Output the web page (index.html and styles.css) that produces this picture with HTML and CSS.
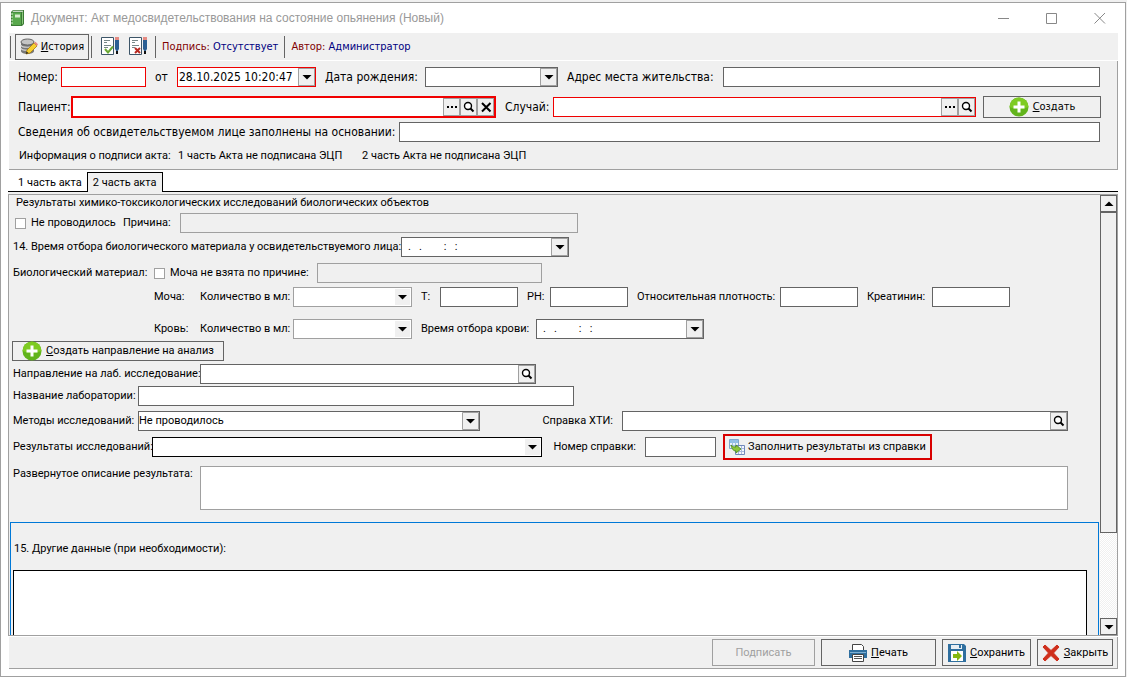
FILE: index.html
```html
<!DOCTYPE html>
<html lang="ru">
<head>
  <meta charset="UTF-8">
  <meta name="viewport" content="width=device-width, initial-scale=1.0">
  <title>Акт медосвидетельствования на состояние опьянения</title>
  <link rel="stylesheet" href="styles.css">
</head>
<body>
  <!-- общие значки -->
  <svg class="sprite" aria-hidden="true">
    <symbol id="icon-plus" viewBox="0 0 20 20">
      <circle cx="10" cy="10" r="9.5" fill="#62b41c"/>
      <path d="M.5 10a9.5 9.5 0 0 1 19 0q-9.5 4-19 0z" fill="#7ecb22"/>
      <path d="M8.500 4.500h3v4h4v3h-4v4h-3v-4h-4v-3h4z" fill="#fff"/>
    </symbol>
    <symbol id="icon-search" viewBox="0 0 12 12">
      <circle cx="5" cy="5" r="3.500" fill="#fff" stroke="#000" stroke-width="1.400"/>
      <path d="M7.500 7.500L10.500 10.500" stroke="#000" stroke-width="2"/>
    </symbol>
    <symbol id="icon-dots" viewBox="0 0 12 12">
      <path d="M1 5h2v2H1zM5 5h2v2H5zM9 5h2v2H9z" fill="#000"/>
    </symbol>
    <symbol id="icon-clear" viewBox="0 0 12 12">
      <path d="M2 2L10.500 10.500M10.500 2L2 10.500" stroke="#000" stroke-width="2"/>
    </symbol>
    <symbol id="icon-down" viewBox="0 0 12 12">
      <path d="M1.500 4h9L6 8.500z" fill="#000"/>
    </symbol>
  </svg>

  <div class="window">
    <!-- заголовок окна -->
    <header class="titlebar">
      <svg class="book" viewBox="0 0 14 16" aria-hidden="true">
        <path d="M1 2L3 0H14V14L12 16H1z" fill="#3b7a35"/>
        <path d="M2 2.500h9V15H2z" fill="#58a84c"/>
        <path d="M3 .8h10v1H2.500z" fill="#f4f7f0"/>
        <path d="M12 2.500l1-1V13.500l-1 1z" fill="#8cc97d"/>
        <path d="M5 4.500h5v3H5z" fill="#d8eccf"/>
        <path d="M1 4h2M1 7h2M1 10h2M1 13h2" stroke="#d8eccf"/>
      </svg>
      <h1>Документ: Акт медосвидетельствования на состояние опьянения (Новый)</h1>
      <div class="window-buttons">
        <button type="button" aria-label="Свернуть"><svg viewBox="0 0 12 12"><path d="M0 6.500h11"/></svg></button>
        <button type="button" aria-label="Развернуть"><svg viewBox="0 0 12 12"><path d="M.5 1.500h10v10H.5z"/></svg></button>
        <button type="button" aria-label="Закрыть окно"><svg viewBox="0 0 12 12"><path d="M.5 1l10.500 10.500M11 1L.5 11.500"/></svg></button>
      </div>
    </header>

    <!-- панель инструментов -->
    <div class="toolbar">
      <span class="divider"></span>
      <button type="button" class="btn btn-history">
        <svg viewBox="0 0 18 17" aria-hidden="true">
          <path d="M1 4v9c0 4 13 4 13 0V4z" fill="#777"/>
          <path d="M1 7c0 3 13 3 13 0M1 10c0 3 13 3 13 0" fill="none" stroke="#d5d5d5" stroke-width="1.200"/>
          <ellipse cx="7.500" cy="4" rx="6.500" ry="3" fill="#c4c4c4" stroke="#666"/>
          <path d="M6 16l1-4 7-7 3 3-7 7z" fill="#f6cf31" stroke="#a57a12" stroke-width=".8"/>
          <path d="M14 5l1.500-1.300L18 6.300 17 8z" fill="#e98a80"/>
          <path d="M6 16l.5-2.500L8.500 15z" fill="#222"/>
        </svg>
        <span><u>И</u>стория</span>
      </button>
      <span class="divider"></span>
      <button type="button" class="tool" aria-label="Подписать акт">
        <svg viewBox="0 0 19 19">
          <path d="M.5.5h12v17H.5z" fill="#fff" stroke="#3d5568"/>
          <path d="M3 3.500h6M3 5.500h3M3 8.500h7M3 10.500h4" stroke="#788"/>
          <path d="M4 12l3 3.500 5-6" fill="none" stroke="#6aa833" stroke-width="2"/>
          <path d="M14 0h4v3h-4z" fill="#e58b83"/><path d="M14 3h4v9l-2 3-2-3z" fill="#2b5f93"/><path d="M15 14h2v3h-2z" fill="#111"/>
        </svg>
      </button>
      <button type="button" class="tool" aria-label="Снять подпись">
        <svg viewBox="0 0 19 19">
          <path d="M.5.5h12v17H.5z" fill="#fff" stroke="#3d5568"/>
          <path d="M3 3.500h6M3 5.500h3M3 8.500h7M3 10.500h3" stroke="#788"/>
          <path d="M6 11l5 5M11 11l-5 5" stroke="#b92a22" stroke-width="2"/>
          <path d="M14 0h4v3h-4z" fill="#e58b83"/><path d="M14 3h4v9l-2 3-2-3z" fill="#2b5f93"/><path d="M15 14h2v3h-2z" fill="#111"/>
        </svg>
      </button>
      <span class="divider"></span>
      <p><span class="key">Подпись:</span> <span class="value">Отсутствует</span></p>
      <span class="divider"></span>
      <p><span class="key">Автор:</span> <span class="value">Администратор</span></p>
    </div>

    <!-- шапка документа -->
    <section class="head">
      <div class="row head-number">
        <label for="number">Номер:</label>
        <div class="field required"><input id="number" type="text"></div>
        <label for="date" class="lead">от</label>
        <div class="field required">
          <input id="date" type="text" value="28.10.2025 10:20:47">
          <button type="button" aria-label="Выбрать дату"><svg><use href="#icon-down"/></svg></button>
        </div>
        <label for="birth" class="lead">Дата рождения:</label>
        <div class="field">
          <input id="birth" type="text">
          <button type="button" aria-label="Выбрать дату рождения"><svg><use href="#icon-down"/></svg></button>
        </div>
        <label for="address" class="lead">Адрес места жительства:</label>
        <div class="field"><input id="address" type="text"></div>
      </div>
      <div class="row head-patient">
        <label for="patient">Пациент:</label>
        <div class="field required focused">
          <input id="patient" type="text">
          <button type="button" aria-label="Выбрать пациента"><svg><use href="#icon-dots"/></svg></button>
          <button type="button" aria-label="Найти пациента"><svg><use href="#icon-search"/></svg></button>
          <button type="button" aria-label="Очистить"><svg><use href="#icon-clear"/></svg></button>
        </div>
        <label for="case" class="lead">Случай:</label>
        <div class="field required">
          <input id="case" type="text">
          <button type="button" aria-label="Выбрать случай"><svg><use href="#icon-dots"/></svg></button>
          <button type="button" aria-label="Найти случай"><svg><use href="#icon-search"/></svg></button>
        </div>
        <button type="button" class="btn btn-create"><svg class="plus"><use href="#icon-plus"/></svg><span><u>С</u>оздать</span></button>
      </div>
      <div class="row head-basis">
        <label for="basis">Сведения об освидетельствуемом лице заполнены на основании:</label>
        <div class="field"><input id="basis" type="text"></div>
      </div>
      <div class="row sign-info">
        <span>Информация о подписи акта:</span>
        <span>1 часть Акта не подписана ЭЦП</span>
        <span>2 часть Акта не подписана ЭЦП</span>
      </div>
    </section>

    <!-- вкладки -->
    <nav class="tabs">
      <button type="button">1 часть акта</button>
      <button type="button" class="active">2 часть акта</button>
    </nav>

    <main class="page">
      <form class="form">
        <h2>Результаты химико-токсикологических исследований биологических объектов</h2>

        <div class="row row-reason">
          <label class="check"><input type="checkbox">Не проводилось</label>
          <label for="reason">Причина:</label>
          <div class="field off"><input id="reason" type="text" disabled></div>
        </div>

        <div class="row row-time">
          <label for="sample-time">14. Время отбора биологического материала у освидетельствуемого лица:</label>
          <div class="field masked">
            <input id="sample-time" type="text" value=".   .        :   :">
            <button type="button" aria-label="Выбрать время"><svg><use href="#icon-down"/></svg></button>
          </div>
        </div>

        <div class="row row-material">
          <span>Биологический материал:</span>
          <label class="check"><input type="checkbox">Моча не взята по причине:</label>
          <div class="field off"><input type="text" aria-label="Причина" disabled></div>
        </div>

        <div class="row row-urine">
          <span>Моча:</span>
          <label for="urine-ml">Количество в мл:</label>
          <select id="urine-ml" class="pale"><option></option></select>
          <label for="urine-t" class="lead">Т:</label>
          <div class="field"><input id="urine-t" type="text"></div>
          <label for="urine-ph" class="lead">PH:</label>
          <div class="field"><input id="urine-ph" type="text"></div>
          <label for="density" class="lead">Относительная плотность:</label>
          <div class="field"><input id="density" type="text"></div>
          <label for="creatinine" class="lead">Креатинин:</label>
          <div class="field"><input id="creatinine" type="text"></div>
        </div>

        <div class="row row-blood">
          <span>Кровь:</span>
          <label for="blood-ml">Количество в мл:</label>
          <select id="blood-ml" class="pale"><option></option></select>
          <label for="blood-time" class="lead">Время отбора крови:</label>
          <div class="field masked">
            <input id="blood-time" type="text" value=".   .        :   :">
            <button type="button" aria-label="Выбрать время"><svg><use href="#icon-down"/></svg></button>
          </div>
        </div>

        <button type="button" class="btn btn-referral"><svg class="plus"><use href="#icon-plus"/></svg><span><u>С</u>оздать направление на анализ</span></button>

        <div class="row row-referral">
          <label for="referral">Направление на лаб. исследование:</label>
          <div class="field">
            <input id="referral" type="text">
            <button type="button" aria-label="Найти направление"><svg><use href="#icon-search"/></svg></button>
          </div>
        </div>

        <div class="row row-lab">
          <label for="lab">Название лаборатории:</label>
          <div class="field"><input id="lab" type="text"></div>
        </div>

        <div class="row row-methods">
          <label for="methods">Методы исследований:</label>
          <select id="methods"><option>Не проводилось</option></select>
          <label for="reference" class="end">Справка ХТИ:</label>
          <div class="field">
            <input id="reference" type="text">
            <button type="button" aria-label="Найти справку"><svg><use href="#icon-search"/></svg></button>
          </div>
        </div>

        <div class="row row-results">
          <label for="results">Результаты исследований:</label>
          <select id="results" class="pale strong"><option></option></select>
          <label for="reference-number" class="end">Номер справки:</label>
          <div class="field"><input id="reference-number" type="text"></div>
          <button type="button" class="btn btn-fill">
            <svg viewBox="0 0 16 16" aria-hidden="true">
              <path d="M.5.5h9v9h-9z" fill="#eaf3fc" stroke="#7fa6cc"/>
              <path d="M1 1h8v3H1z" fill="#8fc0ea"/>
              <path d="M3.500 1v8M6.500 1v8M1 6.500h8" stroke="#9dbfdf"/>
              <path d="M6.500 6.500h9v9h-9z" fill="#f2f6fd" stroke="#7088bb"/>
              <path d="M9.500 7v8M12.500 7v8M7 9.500h8M7 12.500h8" stroke="#a9b9dd"/>
              <path d="M2 6q2 2.500 5 2V6l5 4-5 4v-2Q3 12 2 6z" fill="#8cc63c" stroke="#4c8a1c" stroke-width=".8"/>
            </svg>
            <span>Заполнить результаты из справки</span>
          </button>
        </div>

        <div class="row row-details">
          <label for="details">Развернутое описание результата:</label>
          <textarea id="details"></textarea>
        </div>

        <div class="other">
          <label for="other">15. Другие данные (при необходимости):</label>
          <textarea id="other"></textarea>
        </div>
      </form>

      <div class="scrollbar">
        <button type="button" aria-label="Вверх"><svg viewBox="0 0 12 12"><path d="M1.500 8h9L6 3.500z"/></svg></button>
        <div class="thumb"></div>
        <button type="button" aria-label="Вниз"><svg><use href="#icon-down"/></svg></button>
      </div>
    </main>

    <footer class="actions">
      <button type="button" class="btn btn-sign" disabled>Подписать</button>
      <button type="button" class="btn btn-print">
        <svg viewBox="0 0 18 18" aria-hidden="true">
          <path d="M3.500.5h9l2 2V7h-11z" fill="#fff" stroke="#444"/>
          <path d="M0 6h18v8H0z" fill="#2f6f9f"/>
          <path d="M1 8.500h16" stroke="#7fb0d2"/>
          <path d="M3.500 10.500h11v7h-11z" fill="#fff" stroke="#444"/>
          <path d="M5 12.500h8M5 14.500h8" stroke="#555"/>
        </svg>
        <span><u>П</u>ечать</span>
      </button>
      <button type="button" class="btn btn-save">
        <svg viewBox="0 0 18 18" aria-hidden="true">
          <path d="M0 0h16l2 2v16H0z" fill="#2f6f9f"/>
          <path d="M3 1h11v4H3z" fill="#e8eef3"/><path d="M11 1h2v3h-2z" fill="#2f6f9f"/>
          <path d="M3 7h12v10H3z" fill="#fff"/>
          <path d="M5 10h4V7l5 5-5 5v-3H5z" fill="#84b811"/>
        </svg>
        <span><u>С</u>охранить</span>
      </button>
      <button type="button" class="btn btn-close">
        <svg viewBox="0 0 18 18" aria-hidden="true"><path d="M1 3l2-2 6 5.500L15 1l2 2-5.500 6 5.500 6-2 2-6-5.500L3 17l-2-2 5.500-6z" fill="#cf2f1c" stroke="#cf2f1c"/></svg>
        <span><u>З</u>акрыть</span>
      </button>
    </footer>
  </div>
</body>
</html>
```
FILE: styles.css
```css
* {
  box-sizing: border-box;
}

body {
  --gray: #f0f0f0;
  --line: #a0a0a0;
  --dark: #646464;
  display: flex;
  height: 100vh;
  margin: 0;
  padding: 2px 1px 0 0;
  background: var(--gray);
  color: #000;
  font: 11px/16px Roboto, sans-serif;
}

h1, h2, p {
  margin: 0;
  font-size: inherit;
  font-weight: normal;
}

button, input, select, textarea {
  margin: 0;
  padding: 0;
  border: 0;
  border-radius: 0;
  background: none;
  color: inherit;
  font: inherit;
}

label, span, p, h1, h2 {
  white-space: nowrap;
}

svg {
  display: block;
  flex: none;
}

.sprite {
  display: none;
}

.window {
  display: flex;
  flex: 1;
  flex-direction: column;
  min-width: 0;
  padding: 0 7px 7px;
  border: 1px solid var(--line);
  background: #fff;
}

/* заголовок */
.titlebar {
  display: flex;
  flex: none;
  align-items: center;
  height: 30px;
  padding: 0 12px 0 2px;
  color: #999;
  font-family: "Liberation Sans", sans-serif;
  font-size: 12px;
}

.book {
  width: 14px;
  height: 16px;
  margin-right: 7px;
}

.window-buttons {
  display: flex;
  gap: 36px;
  margin-left: auto;
}

.window-buttons svg {
  width: 12px;
  height: 12px;
  fill: none;
  stroke: #888;
}

/* панель инструментов */
.toolbar {
  display: flex;
  flex: none;
  align-items: center;
  height: 27px;
  margin: 0 0 1px 1px;
  padding-left: 1px;
  background: var(--gray);
  font-family: "DejaVu Sans Condensed", sans-serif;
}

.divider {
  width: 1px;
  height: 22px;
  background: var(--dark);
}

.toolbar p {
  padding: 0 6px;
}

.key {
  color: #800000;
}

.value {
  color: #000080;
}

.tool svg {
  width: 19px;
  height: 19px;
}

.tool {
  margin-left: 9px;
}

.tool + .divider {
  margin-left: 7px;
}

.btn {
  display: flex;
  align-items: center;
  justify-content: center;
  border: 1px solid var(--dark);
  background: var(--gray);
}

.btn-history {
  gap: 3px;
  width: 74px;
  height: 26px;
  margin: 0 2px 0 4px;
}

.btn-history svg {
  width: 18px;
  height: 17px;
}

.plus {
  width: 20px;
  height: 20px;
}

/* строки формы */
.row {
  display: grid;
  align-items: center;
}

.lead {
  padding-left: 9px;
}

.end {
  justify-self: end;
  padding-right: 9px;
}

.field {
  display: flex;
  height: 20px;
  border: 1px solid var(--dark);
  background: #fff;
}

.field input {
  flex: 1;
  min-width: 0;
  padding-left: 1px;
}

.field.masked input {
  padding-left: 6px;
  white-space: pre;
}

.field button {
  display: flex;
  flex: none;
  align-items: center;
  justify-content: center;
  width: 17px;
  border: 1px solid var(--line);
  background: var(--gray);
}

.field svg, .scrollbar svg {
  width: 12px;
  height: 12px;
}

.field.required {
  border-color: #f00000;
}

.field.focused {
  height: 22px;
  border: 2px solid #f00000;
}

.field.off {
  border-color: var(--line);
  background: var(--gray);
}

select {
  appearance: none;
  height: 20px;
  border: 1px solid var(--dark);
  background: #fff url("data:image/svg+xml,%3Csvg xmlns='http://www.w3.org/2000/svg' width='17' height='18'%3E%3Cpath d='M.5.5h16v17H.5z' fill='%23f0f0f0' stroke='%23a0a0a0'/%3E%3Cpath d='M4 7h9l-4.500 4.500z'/%3E%3C/svg%3E") right center no-repeat;
}

select.pale {
  border-color: var(--line);
  background-image: url("data:image/svg+xml,%3Csvg xmlns='http://www.w3.org/2000/svg' width='17' height='18'%3E%3Cpath d='M1 1h15v16H1z' fill='%23f0f0f0'/%3E%3Cpath d='M4 7h9l-4.500 4.500z'/%3E%3C/svg%3E");
}

select.strong {
  border-color: #000;
}

.check {
  display: flex;
  align-items: center;
  gap: 5px;
}

.check input {
  appearance: none;
  width: 11px;
  height: 11px;
  border: 1px solid var(--line);
  background: #fff;
}

textarea {
  display: block;
  width: 100%;
  resize: none;
  border: 1px solid var(--line);
  background: #fff;
}

/* шапка */
.head {
  flex: none;
  margin-left: 1px;
  padding: 6px 17px 5px 9px;
  border: solid var(--line);
  border-width: 0 1px 1px 0;
  background: var(--gray);
  font-family: "DejaVu Sans Condensed", sans-serif;
  font-size: 12px;
}

.head-number {
  grid-template-columns: 43px 85px 31px 139px 109px 133px 165px 1fr;
}

.head-patient {
  grid-template-columns: 53px 425px 57px 1fr 125px;
  margin: 9px -1px 0 0;
}

.head-basis {
  grid-template-columns: 381px 1fr;
  margin-top: 4px;
}

.sign-info {
  grid-template-columns: 159px 184px 1fr;
  margin-top: 6px;
  padding-left: 1px;
  font-family: Roboto, sans-serif;
  font-size: 11px;
}

.btn-create {
  gap: 4px;
  height: 22px;
  margin-left: 7px;
  font-size: 11px;
}

/* вкладки */
.tabs {
  display: flex;
  flex: none;
  height: 20px;
  margin-top: 2px;
  padding-left: 5px;
  border-bottom: 1px solid #000;
}

.tabs button {
  padding: 2px 5px 0;
}

.tabs .active {
  height: 20px;
  padding-top: 1px;
  border: 1px solid #000;
  border-bottom: 0;
  background: var(--gray);
}

/* прокручиваемая часть */
.page {
  display: flex;
  flex: 1;
  min-height: 0;
  margin-top: 2px;
  border: 1px solid var(--line);
  box-shadow: 0 -2px var(--gray);
}

.form {
  flex: 1;
  min-width: 0;
  overflow: hidden;
  background: var(--gray);
}

.form h2 {
  padding-left: 7px;
}

.form .row {
  padding: 0 32px 0 4px;
}

.form .row-reason {
  grid-template-columns: 108px 57px 398px;
  margin-top: 2px;
  padding-left: 6px;
}

.row-time {
  grid-template-columns: 388px 168px;
  margin-top: 4px;
}

.row-material {
  grid-template-columns: 141px 163px 225px;
  margin-top: 6px;
}

.form .row-urine,
.form .row-blood {
  padding-left: 145px;
}

.row-urine {
  grid-template-columns: 46px 93px 119px 28px 78px 32px 78px 152px 78px 74px 78px;
  margin-top: 4px;
}

.row-blood {
  grid-template-columns: 46px 93px 119px 124px 168px;
  margin-top: 12px;
}

.btn-referral {
  gap: 4px;
  width: 212px;
  height: 20px;
  margin: 2px 0 0 3px;
}

.row-referral {
  grid-template-columns: 187px 336px;
  margin-top: 3px;
}

.row-lab {
  grid-template-columns: 125px 436px;
  margin-top: 2px;
}

.row-methods {
  grid-template-columns: 125px 342px 142px 1fr;
  margin-top: 5px;
}

.row-results {
  grid-template-columns: 139px 390px 103px 71px 216px;
  margin-top: 3px;
}

.btn-fill {
  gap: 3px;
  height: 26px;
  margin-left: 7px;
  border: 2px solid #d80000;
}

.btn-fill svg {
  width: 16px;
  height: 16px;
}

.form .row-details {
  grid-template-columns: 187px 1fr;
  align-items: start;
  margin-top: 6px;
}

.row-details textarea {
  height: 44px;
}

.other {
  margin: 12px 1px 0;
  padding: 18px 11px 0 2px;
  border: 1px solid #0078d7;
}

.other label {
  display: block;
  padding-left: 1px;
}

.other textarea {
  height: 160px;
  margin-top: 13px;
  border-color: #000;
}

.scrollbar {
  display: flex;
  flex: none;
  flex-direction: column;
  width: 17px;
  background: repeating-conic-gradient(#fff 0 25%, #f0f0f0 0 50%) 0 0 / 2px 2px;
}

.scrollbar button {
  display: flex;
  flex: none;
  align-items: center;
  justify-content: center;
  height: 17px;
  border: 1px solid var(--dark);
  background: var(--gray);
}

.thumb {
  height: 73%;
  margin-bottom: auto;
  border: 1px solid var(--dark);
  background: var(--gray);
}

/* кнопки внизу */
.actions {
  display: flex;
  flex: none;
  justify-content: flex-end;
  gap: 6px;
  height: 32px;
  margin: 1px 0 0 1px;
  padding: 2px 4px 2px 0;
  border: solid var(--line);
  border-width: 0 1px 1px 0;
  background: var(--gray);
}

.actions .btn {
  gap: 4px;
  height: 27px;
}

.actions svg {
  width: 18px;
  height: 18px;
}

.actions .btn-sign {
  width: 103px;
  border-color: var(--line);
  color: var(--line);
}

.actions .btn-print {
  width: 115px;
}

.actions .btn-save {
  width: 89px;
}

.actions .btn-close {
  width: 76px;
}
```
